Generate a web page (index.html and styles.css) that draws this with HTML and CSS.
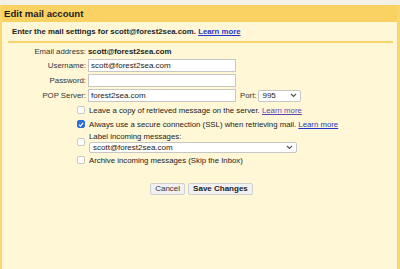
FILE: index.html
```html
<!DOCTYPE html>
<html lang="en">
<head>
    <meta charset="UTF-8">
    <title>Edit mail account</title>
    <link rel="stylesheet" href="styles.css">
</head>
<body>
    <div class="top-strip"></div>
    <div class="dialog">
        <div class="dialog-title">Edit mail account</div>
        <div class="dialog-body">
            <div class="intro">Enter the mail settings for scott@forest2sea.com. <a href="#">Learn more</a></div>
            <div class="separator"></div>

            <table class="form">
                <tr class="email-row">
                    <td class="label">Email address:</td>
                    <td class="value"><b>scott@forest2sea.com</b></td>
                </tr>
                <tr>
                    <td class="label">Username:</td>
                    <td class="value"><input class="text" type="text" value="scott@forest2sea.com"></td>
                </tr>
                <tr>
                    <td class="label">Password:</td>
                    <td class="value"><input class="text" type="password"></td>
                </tr>
                <tr>
                    <td class="label">POP Server:</td>
                    <td class="value">
                        <div class="server-line">
                            <input class="text" type="text" value="forest2sea.com">
                            <span class="port-label">Port:</span>
                            <span class="select port">995
                                <svg class="chev" width="7" height="5" viewBox="0 0 7 5"><path d="M1 1 L3.5 3.5 L6 1" fill="none" stroke="#555" stroke-width="1.2"/></svg>
                            </span>
                        </div>
                    </td>
                </tr>
            </table>

            <div class="options">
                <div class="option">
                    <span class="check"></span>
                    <span>Leave a copy of retrieved message on the server. <a href="#" class="visited">Learn more</a></span>
                </div>
                <div class="option">
                    <span class="check checked">
                        <svg width="7" height="7" viewBox="0 0 8 8"><path d="M1.3 4.2 L3.2 6.1 L6.8 1.8" fill="none" stroke="#fff" stroke-width="1.5"/></svg>
                    </span>
                    <span>Always use a secure connection (SSL) when retrieving mail. <a href="#">Learn more</a></span>
                </div>
                <div class="option label-option">
                    <span class="check"></span>
                    <div>
                        <div class="label-text">Label incoming messages:</div>
                        <span class="select label-select">scott@forest2sea.com
                            <svg class="chev" width="7" height="5" viewBox="0 0 7 5"><path d="M1 1 L3.5 3.5 L6 1" fill="none" stroke="#555" stroke-width="1.2"/></svg>
                        </span>
                    </div>
                </div>
                <div class="option">
                    <span class="check"></span>
                    <span>Archive incoming messages (Skip the Inbox)</span>
                </div>
            </div>

            <div class="buttons">
                <button class="btn">Cancel</button>
                <button class="btn primary">Save Changes</button>
            </div>
        </div>
    </div>
</body>
</html>
```

FILE: styles.css
```css
body {
    margin: 0;
    font-family: 'Liberation Sans', Arial, sans-serif;
    font-size: 7.8px;
    color: #222;
    background-color: #fff7d6;
    height: 269px;
    overflow: hidden;
}

.top-strip {
    height: 5px;
    background-color: #f4f1e6;
}

.dialog {
    border-left: 2px solid #f8d770;
    border-right: 3px solid #f8d770;
    height: 264px;
    box-sizing: border-box;
}

.dialog-title {
    background-color: #fad163;
    font-size: 9.6px;
    font-weight: bold;
    padding: 0 2px;
    height: 17px;
    line-height: 17px;
    color: #1d1d1d;
}

.dialog-body {
    padding: 5px 4px 0 6px;
}

.intro {
    font-weight: bold;
    padding-left: 4px;
    line-height: 10px;
    height: 10px;
}

a {
    color: #2635c9;
    text-decoration: underline;
}

a.visited {
    color: #5b46b5;
}

.separator {
    height: 2px;
    background-color: #f6d467;
    margin: 4px 0 2px 0;
}

.form {
    border-collapse: collapse;
}

.form td {
    padding: 0;
    height: 15px;
}

.form .email-row td {
    height: 13px;
}

.form .label {
    width: 78px;
    text-align: right;
    color: #333;
}

.form .value {
    padding-left: 2px;
}

.server-line {
    display: flex;
    align-items: center;
}

.text {
    width: 148px;
    height: 13px;
    box-sizing: border-box;
    border: 1px solid #c6c6c6;
    background-color: #fff;
    font-family: inherit;
    font-size: 8px;
    padding: 0 2px;
    margin: 0;
    display: block;
    color: #222;
}

.port-label {
    margin: 0 2px 0 4px;
    color: #333;
}

.select {
    display: inline-flex;
    justify-content: space-between;
    align-items: center;
    height: 12px;
    box-sizing: border-box;
    border: 1px solid #c6c6c6;
    border-radius: 2px;
    background-color: #fff;
    padding: 0 3px 0 3px;
    font-size: 8px;
}

.port {
    width: 43px;
}

.options {
    padding-left: 69px;
}

.option {
    display: flex;
    align-items: center;
    gap: 4px;
    height: 14px;
}

.check {
    width: 8px;
    height: 8px;
    box-sizing: border-box;
    border: 1px solid #c8c8c8;
    border-radius: 2px;
    background-color: #fff;
    display: inline-flex;
    align-items: center;
    justify-content: center;
    flex: none;
}

.check.checked {
    background-color: #2d6fd6;
    border-color: #2d6fd6;
}

.label-option {
    height: 22px;
}

.label-text {
    line-height: 10px;
    height: 10px;
}

.label-select {
    width: 208px;
    height: 11px;
}

.buttons {
    display: flex;
    justify-content: center;
    gap: 3px;
    margin-top: 16px;
    padding-left: 2px;
}

.btn {
    font-family: inherit;
    font-size: 8px;
    height: 12px;
    padding: 0 4px;
    border: 1px solid #d0d0d0;
    background-color: #f1f1f1;
    color: #333;
    border-radius: 2px;
    line-height: 10px;
}

.btn.primary {
    font-weight: bold;
    color: #222;
}
```
